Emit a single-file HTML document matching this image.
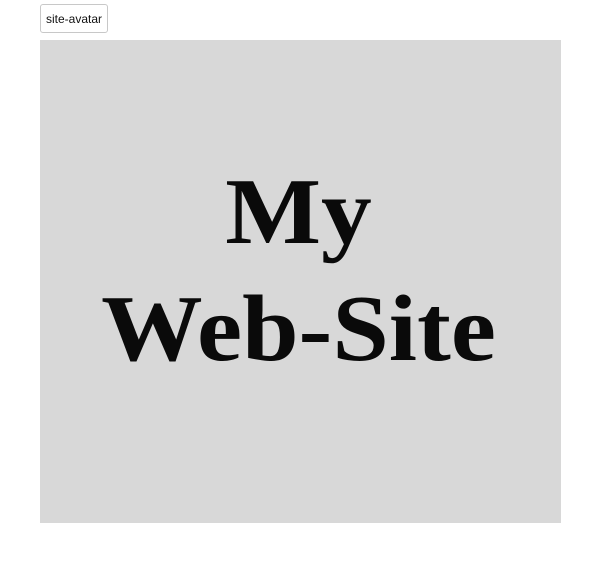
<!DOCTYPE html>
<html><head><meta charset="utf-8"><style>
html,body{margin:0;padding:0;background:#fff;width:601px;height:564px;overflow:hidden}
.btn{position:absolute;left:40px;top:4px;width:66px;height:27px;border:1px solid #c8c8c8;border-radius:3px;background:#fff;font:12px "Liberation Sans",sans-serif;color:#111;display:flex;align-items:center;justify-content:center}
.box{position:absolute;left:40px;top:40px;width:521px;height:483px;background:#d8d8d8}
.t{position:absolute;left:0;width:100%;text-align:center;font:bold 94px "Liberation Serif",serif;color:#0a0a0a;line-height:1;transform:scaleX(1.08)}
</style></head><body>
<div class="btn">site-avatar</div>
<div class="box">
<div class="t" style="top:125px;left:-2px">My</div>
<div class="t" style="top:242px;left:-2px">Web-Site</div>
</div>
</body></html>
